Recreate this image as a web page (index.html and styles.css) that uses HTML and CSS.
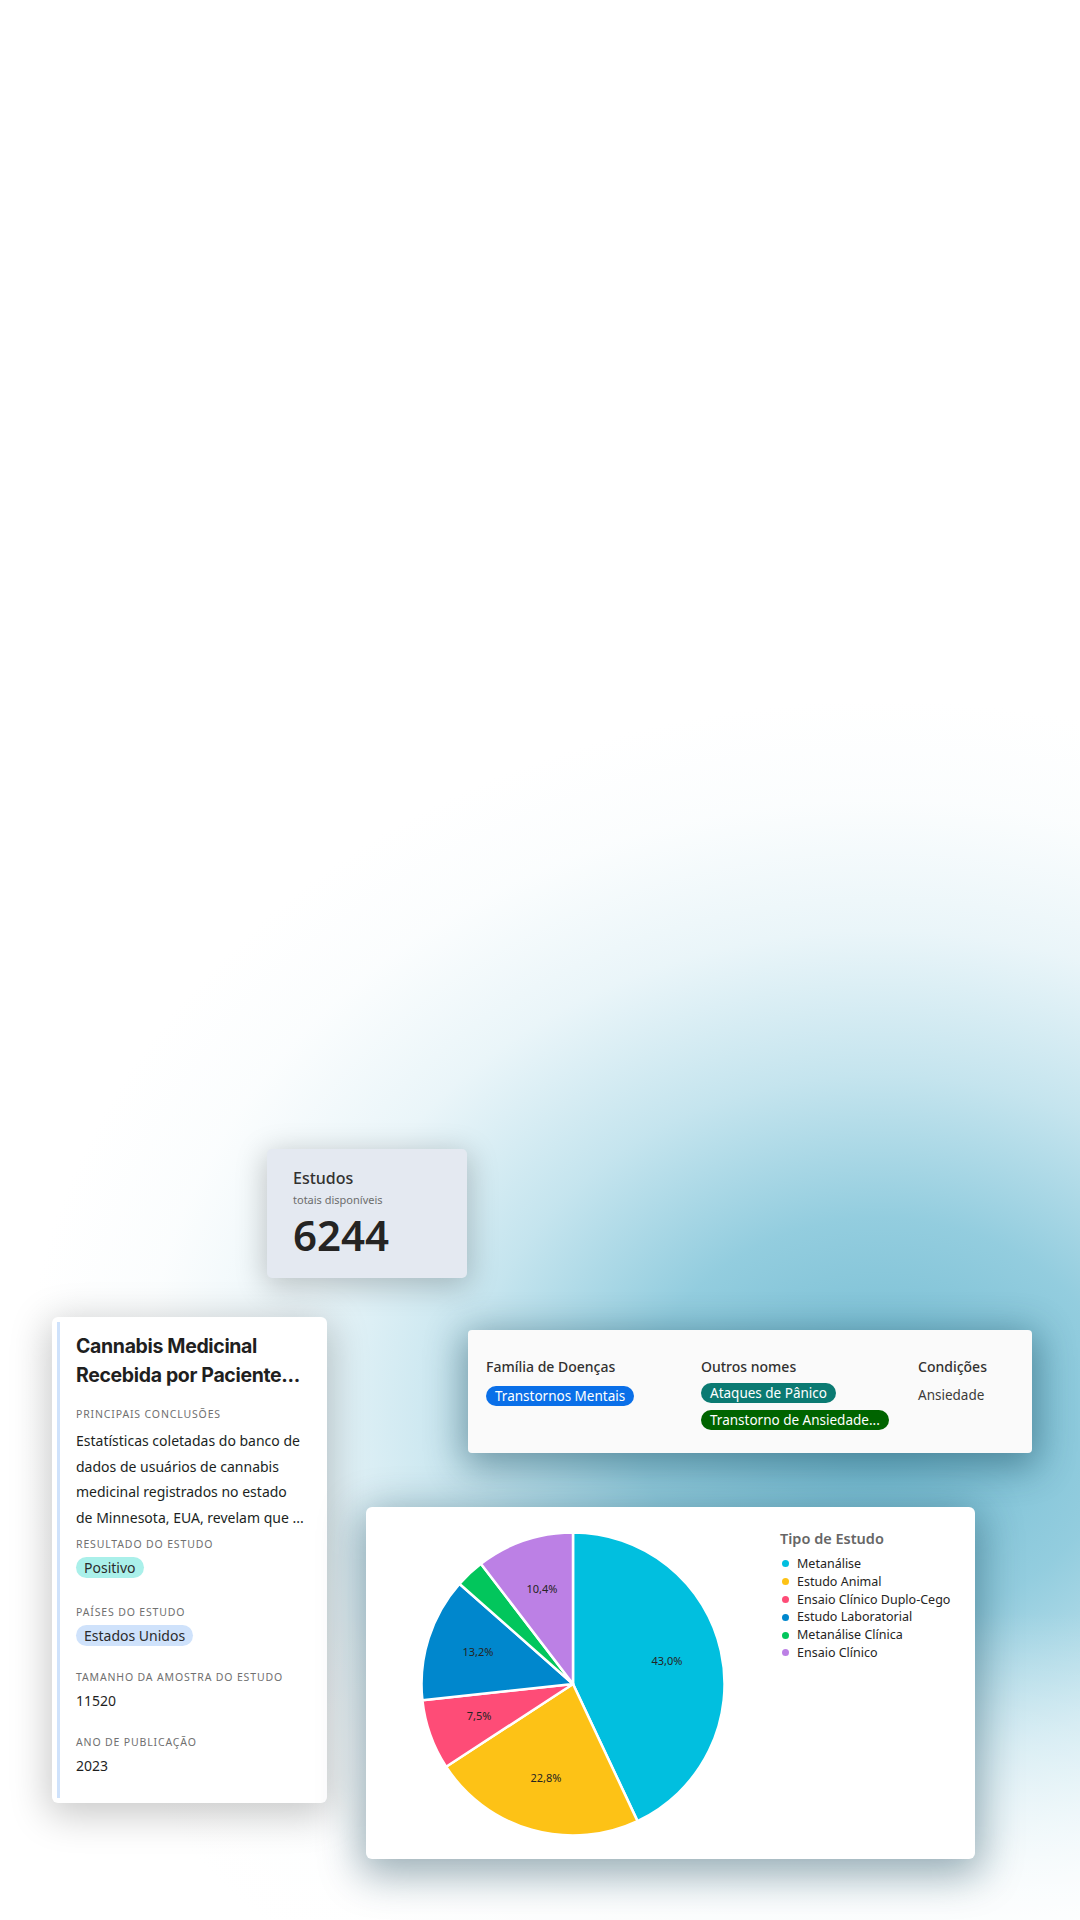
FILE: index.html
```html
<!DOCTYPE html>
<html lang="pt-BR">
<head>
<meta charset="utf-8">
<title>Estudos</title>
<link rel="stylesheet" href="styles.css">
</head>
<body>
<div class="stage">
  <section class="card stat">
    <div class="stat-title">Estudos</div>
    <div class="stat-sub">totais disponíveis</div>
    <div class="stat-num">6244</div>
  </section>

  <article class="card study">
    <div class="study-inner">
      <h2 class="study-title">Cannabis Medicinal<br>Recebida por Paciente...</h2>
      <div class="field field-first">
        <div class="label">Principais conclusões</div>
        <p class="desc">Estatísticas coletadas do banco de<br>dados de usuários de cannabis<br>medicinal registrados no estado<br>de Minnesota, EUA, revelam que ...</p>
      </div>
      <div class="field field-tight">
        <div class="label">Resultado do estudo</div>
        <span class="chip chip-teal">Positivo</span>
      </div>
      <div class="field field-after-chip">
        <div class="label">Países do estudo</div>
        <span class="chip chip-blue">Estados Unidos</span>
      </div>
      <div class="field">
        <div class="label">Tamanho da amostra do estudo</div>
        <div class="value">11520</div>
      </div>
      <div class="field">
        <div class="label">Ano de publicação</div>
        <div class="value">2023</div>
      </div>
    </div>
  </article>

  <section class="card tags">
    <div class="tag-col col-fam">
      <div class="tag-head">Família de Doenças</div>
      <div class="pill-list pill-list-fam">
        <span class="pill pill-blue">Transtornos Mentais</span>
      </div>
    </div>
    <div class="tag-col col-names">
      <div class="tag-head">Outros nomes</div>
      <div class="pill-list">
        <span class="pill pill-teal">Ataques de Pânico</span>
        <span class="pill pill-green">Transtorno de Ansiedade...</span>
      </div>
    </div>
    <div class="tag-col col-cond">
      <div class="tag-head">Condições</div>
      <div class="cond">Ansiedade</div>
    </div>
  </section>

  <section class="card chart">
    <svg class="pie" width="414" height="352" viewBox="0 0 414 352">
      <g stroke="#ffffff" stroke-width="2.5" stroke-linejoin="round">
        <path fill="#01bfdf" d="M207,177 L207,25.5 A151.5,151.5 0 0 1 271.5,314.1 Z"/>
        <path fill="#fdc216" d="M207,177 L271.5,314.1 A151.5,151.5 0 0 1 80.1,259.8 Z"/>
        <path fill="#fe4c77" d="M207,177 L80.1,259.8 A151.5,151.5 0 0 1 56.4,193.2 Z"/>
        <path fill="#0087cd" d="M207,177 L56.4,193.2 A151.5,151.5 0 0 1 93.4,76.8 Z"/>
        <path fill="#02c65c" d="M207,177 L93.4,76.8 A151.5,151.5 0 0 1 114.9,56.7 Z"/>
        <path fill="#bc80e5" d="M207,177 L114.9,56.7 A151.5,151.5 0 0 1 207,25.5 Z"/>
      </g>
      <g class="pie-labels">
        <text x="301" y="155">43,0%</text>
        <text x="180" y="272">22,8%</text>
        <text x="113" y="210">7,5%</text>
        <text x="112" y="146">13,2%</text>
        <text x="176" y="83">10,4%</text>
      </g>
    </svg>
    <div class="legend">
      <div class="legend-title">Tipo de Estudo</div>
      <ul class="legend-list">
        <li><span class="dot dot-cyan"></span>Metanálise</li>
        <li><span class="dot dot-yellow"></span>Estudo Animal</li>
        <li><span class="dot dot-pink"></span>Ensaio Clínico Duplo-Cego</li>
        <li><span class="dot dot-blue"></span>Estudo Laboratorial</li>
        <li><span class="dot dot-green"></span>Metanálise Clínica</li>
        <li><span class="dot dot-purple"></span>Ensaio Clínico</li>
      </ul>
    </div>
  </section>
</div>
</body>
</html>
```

FILE: styles.css
```css
html, body {
  margin: 0;
  padding: 0;
}

body {
  width: 1080px;
  height: 1920px;
  overflow: hidden;
  font-family: "Noto Sans", "Open Sans", sans-serif;
  color: #252423;
  background:
    linear-gradient(to bottom, rgba(255, 255, 255, 0) 84%, rgba(255, 255, 255, 0.85) 100%),
    radial-gradient(ellipse 860px 720px at 880px 1420px,
      rgba(105, 182, 206, 0.95) 0%,
      rgba(132, 198, 218, 0.88) 28%,
      rgba(172, 217, 231, 0.7) 48%,
      rgba(210, 234, 242, 0.47) 68%,
      rgba(236, 246, 249, 0.22) 86%,
      rgba(255, 255, 255, 0) 100%),
    #ffffff;
}

.stage {
  position: relative;
  width: 1080px;
  height: 1920px;
}

.card {
  position: absolute;
  box-sizing: border-box;
}

/* ---------- Estudos stat card ---------- */
.stat {
  left: 267px;
  top: 1149px;
  width: 200px;
  height: 129px;
  padding: 19px 26px 0;
  background: #e4e9f1;
  border-radius: 5px;
  box-shadow: 0 6px 30px 2px rgba(0, 0, 0, 0.22);
  display: flex;
  flex-direction: column;
}

.stat-title {
  font-size: 16px;
  line-height: 20px;
  font-weight: 500;
  color: #323130;
}

.stat-sub {
  margin-top: 5px;
  font-size: 11px;
  line-height: 14px;
  color: #6d6d6d;
}

.stat-num {
  margin-top: 3px;
  font-size: 42px;
  line-height: 50px;
  font-weight: 600;
  color: #252423;
}

/* ---------- Study card ---------- */
.study {
  left: 52px;
  top: 1317px;
  width: 275px;
  height: 486px;
  padding: 5px;
  background: #ffffff;
  border-radius: 6px;
  box-shadow: 0 8px 38px 4px rgba(0, 0, 0, 0.22);
}

.study-inner {
  box-sizing: border-box;
  height: 100%;
  border-left: 3.5px solid #cfe2fb;
  padding: 10px 14px 0 16px;
  display: flex;
  flex-direction: column;
}

.study-title {
  margin: 0;
  font-family: Inter, "Noto Sans", sans-serif;
  font-size: 19.5px;
  line-height: 29px;
  font-weight: 700;
  letter-spacing: -0.35px;
  white-space: nowrap;
  color: #1f1f1f;
}

.field {
  margin-top: 24px;
  display: flex;
  flex-direction: column;
  align-items: flex-start;
}

.field-first {
  margin-top: 17px;
}

.field-tight {
  margin-top: 7px;
}

.field-after-chip {
  margin-top: 27px;
}

.label {
  font-size: 10.5px;
  line-height: 14px;
  letter-spacing: 0.85px;
  text-transform: uppercase;
  color: #707070;
  margin-bottom: 7px;
  white-space: nowrap;
}

.desc {
  margin: 0;
  font-size: 14px;
  line-height: 25.5px;
  color: #201f1e;
  white-space: nowrap;
}

.chip {
  display: inline-block;
  font-size: 14px;
  line-height: 21px;
  padding: 0 8px;
  border-radius: 11px;
  color: #2b2b2b;
  margin-top: -1px;
}

.chip-teal {
  background: #aaf0ea;
}

.chip-blue {
  background: #cfe2fb;
}

.value {
  font-size: 14px;
  line-height: 20px;
  color: #1f1f1f;
}

/* ---------- Tags card ---------- */
.tags {
  left: 468px;
  top: 1330px;
  width: 564px;
  height: 123px;
  padding: 28px 0 0 18px;
  background: #fafafa;
  border-radius: 4px;
  box-shadow: 0 8px 36px 6px rgba(8, 55, 75, 0.42);
  display: grid;
  grid-template-columns: 215px 217px 1fr;
  align-items: start;
}

.tag-col {
  display: flex;
  flex-direction: column;
  align-items: flex-start;
}

.tag-head {
  font-size: 14px;
  line-height: 18px;
  font-weight: 500;
  color: #323130;
}

.pill-list {
  display: flex;
  flex-direction: column;
  align-items: flex-start;
  gap: 7px;
  margin-top: 7px;
}

.pill-list-fam {
  margin-top: 10px;
}

.pill {
  font-size: 13.5px;
  line-height: 20px;
  padding: 0 9px;
  border-radius: 10px;
  color: #ffffff;
  white-space: nowrap;
}

.pill-blue {
  background: #0a6fe8;
}

.pill-teal {
  background: #0b7a72;
}

.pill-green {
  background: #006400;
}

.cond {
  margin-top: 9px;
  font-size: 13.5px;
  line-height: 20px;
  color: #3b3a39;
}

/* ---------- Chart card ---------- */
.chart {
  left: 366px;
  top: 1507px;
  width: 609px;
  height: 352px;
  background: #ffffff;
  border-radius: 6px;
  box-shadow: 0 10px 40px 6px rgba(8, 55, 75, 0.4);
  display: flex;
  align-items: flex-start;
}

.pie {
  display: block;
  flex: none;
}

.pie-labels text {
  font-family: "Noto Sans", sans-serif;
  font-size: 11px;
  fill: #252423;
  text-anchor: middle;
  dominant-baseline: middle;
}

.legend {
  padding-top: 21px;
}

.legend-title {
  font-size: 14.5px;
  line-height: 20px;
  font-weight: 600;
  color: #666666;
}

.legend-list {
  list-style: none;
  margin: 7px 0 0;
  padding: 0 0 0 2px;
}

.legend-list li {
  display: flex;
  align-items: center;
  font-size: 12.5px;
  line-height: 17.8px;
  color: #252423;
}

.dot {
  width: 7px;
  height: 7px;
  border-radius: 50%;
  margin-right: 8px;
  flex: none;
}

.dot-cyan { background: #01bfdf; }
.dot-yellow { background: #fdc216; }
.dot-pink { background: #fe4c77; }
.dot-blue { background: #0087cd; }
.dot-green { background: #02c65c; }
.dot-purple { background: #bc80e5; }
```
